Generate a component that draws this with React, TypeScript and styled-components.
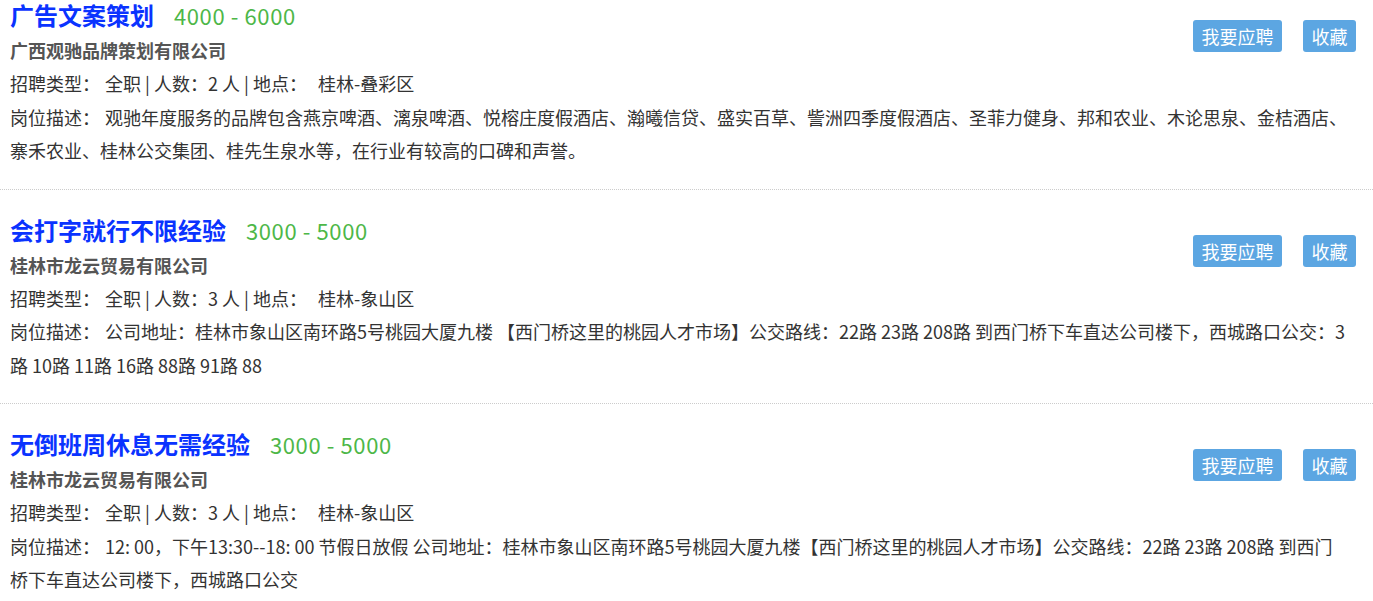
import styled, { createGlobalStyle } from 'styled-components';

const GlobalStyle = createGlobalStyle`
	html, body {
		margin: 0;
		padding: 0;
		background: #fff;
	}
	body {
		font-family: 'Noto Sans CJK SC', 'Noto Sans', sans-serif;
		color: #333;
	}
`;

const List = styled.div`
	width: 1373px;
`;

const Item = styled.div`
	padding: 25px 17px 21px 10px;
	border-bottom: 1px dotted #ccc;
	&:first-child {
		padding-top: 0;
	}
	&:last-child {
		border-bottom: none;
	}
`;

const Header = styled.div`
	display: flex;
	justify-content: space-between;
	align-items: flex-start;
`;

const TitleRow = styled.div`
	display: flex;
	align-items: baseline;
	height: 29px;
	line-height: 29px;
`;

const JobTitle = styled.a`
	font-size: 24px;
	font-weight: bold;
	color: #0a33ff;
	text-decoration: none;
`;

const Salary = styled.span`
	margin-left: 20px;
	font-size: 22px;
	letter-spacing: 0.6px;
	color: #4db748;
`;

const Company = styled.div`
	margin-top: 4px;
	font-size: 18px;
	font-weight: bold;
	color: #555;
	line-height: 34px;
`;

const Actions = styled.div`
	display: flex;
	gap: 21px;
	margin-top: 20px;
`;

const Button = styled.button`
	height: 32px;
	padding: 0 8.5px;
	border: none;
	border-radius: 3px;
	background: #5ca6e2;
	color: #fff;
	font-family: inherit;
	font-size: 18px;
	line-height: 32px;
	cursor: pointer;
`;

const Line = styled.div`
	margin-right: 9px;
	font-size: 18px;
	line-height: 33.5px;
	color: #333;
`;

const Value = styled.span<{ $gap: number }>`
	margin-left: ${(p) => p.$gap}px;
`;

type Job = {
	id: number;
	title: string;
	salary: string;
	company: string;
	count: number;
	place: string;
	desc: string;
};

const jobs: Job[] = [
	{
		id: 1,
		title: '广告文案策划',
		salary: '4000 - 6000',
		company: '广西观驰品牌策划有限公司',
		count: 2,
		place: '桂林-叠彩区',
		desc: '观驰年度服务的品牌包含燕京啤酒、漓泉啤酒、悦榕庄度假酒店、瀚曦信贷、盛实百草、訾洲四季度假酒店、圣菲力健身、邦和农业、木论思泉、金桔酒店、寨禾农业、桂林公交集团、桂先生泉水等，在行业有较高的口碑和声誉。',
	},
	{
		id: 2,
		title: '会打字就行不限经验',
		salary: '3000 - 5000',
		company: '桂林市龙云贸易有限公司',
		count: 3,
		place: '桂林-象山区',
		desc: '公司地址：桂林市象山区南环路5号桃园大厦九楼 【西门桥这里的桃园人才市场】公交路线：22路 23路 208路 到西门桥下车直达公司楼下，西城路口公交：3路 10路 11路 16路 88路 91路 88',
	},
	{
		id: 3,
		title: '无倒班周休息无需经验',
		salary: '3000 - 5000',
		company: '桂林市龙云贸易有限公司',
		count: 3,
		place: '桂林-象山区',
		desc: '12: 00，下午13:30--18: 00 节假日放假 公司地址：桂林市象山区南环路5号桃园大厦九楼【西门桥这里的桃园人才市场】公交路线：22路 23路 208路 到西门桥下车直达公司楼下，西城路口公交',
	},
];

const App = () => {
	return (
		<>
			<GlobalStyle />
			<List>
				{jobs.map((job) => (
					<Item key={job.id}>
						<Header>
							<div>
								<TitleRow>
									<JobTitle href='#'>{job.title}</JobTitle>
									<Salary>{job.salary}</Salary>
								</TitleRow>
								<Company>{job.company}</Company>
							</div>
							<Actions>
								<Button>我要应聘</Button>
								<Button>收藏</Button>
							</Actions>
						</Header>
						<Line>
							招聘类型：<Value $gap={5}>全职 | 人数：{job.count} 人 | 地点：</Value>
							<Value $gap={11}>{job.place}</Value>
						</Line>
						<Line>
							岗位描述：<Value $gap={5}>{job.desc}</Value>
						</Line>
					</Item>
				))}
			</List>
		</>
	);
};

export default App;
